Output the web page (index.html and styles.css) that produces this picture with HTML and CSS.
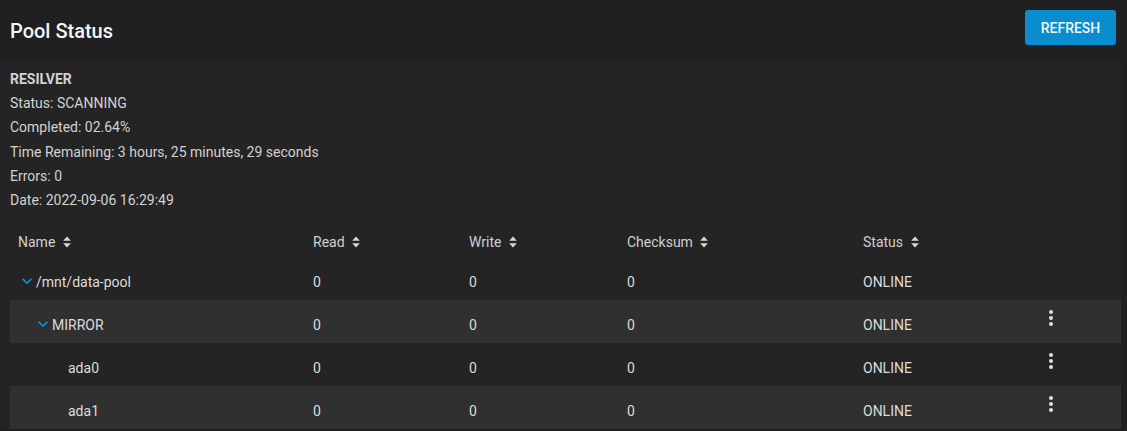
FILE: index.html
```html
<!DOCTYPE html>
<html>
<head>
    <title>Pool Status</title>
    <link rel="stylesheet" href="styles.css">
</head>
<body>
    <div class="page-header">
        <h1>Pool Status</h1>
        <button class="btn-refresh">Refresh</button>
    </div>

    <div class="card">
        <div class="scan-info">
            <div class="scan-title">RESILVER</div>
            <div>Status: SCANNING</div>
            <div>Completed: 02.64%</div>
            <div>Time Remaining: 3 hours, 25 minutes, 29 seconds</div>
            <div>Errors: 0</div>
            <div>Date: 2022-09-06 16:29:49</div>
        </div>

        <table class="pool-table">
            <colgroup>
                <col style="width: 295px">
                <col style="width: 156px">
                <col style="width: 158px">
                <col style="width: 236px">
                <col style="width: 174px">
                <col>
            </colgroup>
            <thead>
                <tr>
                    <th>Name <span class="sort"><svg viewBox="0 0 8 12" width="8" height="12"><path d="M4 0.5 L7.8 4.8 H0.2 Z M4 11.5 L7.8 7.2 H0.2 Z" fill="#d6d6d6"/></svg></span></th>
                    <th>Read <span class="sort"><svg viewBox="0 0 8 12" width="8" height="12"><path d="M4 0.5 L7.8 4.8 H0.2 Z M4 11.5 L7.8 7.2 H0.2 Z" fill="#d6d6d6"/></svg></span></th>
                    <th>Write <span class="sort"><svg viewBox="0 0 8 12" width="8" height="12"><path d="M4 0.5 L7.8 4.8 H0.2 Z M4 11.5 L7.8 7.2 H0.2 Z" fill="#d6d6d6"/></svg></span></th>
                    <th>Checksum <span class="sort"><svg viewBox="0 0 8 12" width="8" height="12"><path d="M4 0.5 L7.8 4.8 H0.2 Z M4 11.5 L7.8 7.2 H0.2 Z" fill="#d6d6d6"/></svg></span></th>
                    <th>Status <span class="sort"><svg viewBox="0 0 8 12" width="8" height="12"><path d="M4 0.5 L7.8 4.8 H0.2 Z M4 11.5 L7.8 7.2 H0.2 Z" fill="#d6d6d6"/></svg></span></th>
                    <th></th>
                </tr>
            </thead>
            <tbody>
                <tr>
                    <td><div class="name-cell"><svg class="chevron" viewBox="0 0 24 24" width="20" height="20"><path d="M7.41 8.59L12 13.17l4.59-4.58L18 10l-6 6-6-6 1.41-1.41z" fill="#0a95d6"/></svg>/mnt/data-pool</div></td>
                    <td>0</td>
                    <td>0</td>
                    <td>0</td>
                    <td>ONLINE</td>
                    <td class="actions"></td>
                </tr>
                <tr class="striped">
                    <td><div class="name-cell level-1"><svg class="chevron" viewBox="0 0 24 24" width="20" height="20"><path d="M7.41 8.59L12 13.17l4.59-4.58L18 10l-6 6-6-6 1.41-1.41z" fill="#0a95d6"/></svg>MIRROR</div></td>
                    <td>0</td>
                    <td>0</td>
                    <td>0</td>
                    <td>ONLINE</td>
                    <td class="actions"><svg viewBox="0 0 24 24" width="24" height="24"><circle cx="12" cy="6" r="2" fill="#e0e0e0"/><circle cx="12" cy="12" r="2" fill="#e0e0e0"/><circle cx="12" cy="18" r="2" fill="#e0e0e0"/></svg></td>
                </tr>
                <tr>
                    <td><div class="name-cell level-2"><span class="leaf"></span>ada0</div></td>
                    <td>0</td>
                    <td>0</td>
                    <td>0</td>
                    <td>ONLINE</td>
                    <td class="actions"><svg viewBox="0 0 24 24" width="24" height="24"><circle cx="12" cy="6" r="2" fill="#e0e0e0"/><circle cx="12" cy="12" r="2" fill="#e0e0e0"/><circle cx="12" cy="18" r="2" fill="#e0e0e0"/></svg></td>
                </tr>
                <tr class="striped">
                    <td><div class="name-cell level-2"><span class="leaf"></span>ada1</div></td>
                    <td>0</td>
                    <td>0</td>
                    <td>0</td>
                    <td>ONLINE</td>
                    <td class="actions"><svg viewBox="0 0 24 24" width="24" height="24"><circle cx="12" cy="6" r="2" fill="#e0e0e0"/><circle cx="12" cy="12" r="2" fill="#e0e0e0"/><circle cx="12" cy="18" r="2" fill="#e0e0e0"/></svg></td>
                </tr>
            </tbody>
        </table>
    </div>
</body>
</html>
```

FILE: styles.css
```css
body {
    margin: 0;
    font-family: Roboto, 'Liberation Sans', sans-serif;
    background-color: #1f1f1f;
    color: #dcdcdc;
    width: 1127px;
    height: 431px;
    overflow: hidden;
}

.page-header {
    height: 60px;
    display: flex;
    align-items: center;
    justify-content: space-between;
    padding: 0 11px 0 10px;
    background-color: #202020;
}

.page-header h1 {
    margin: 0;
    font-size: 20px;
    font-weight: 500;
    color: #f5f5f5;
    padding-top: 1px;
}

.btn-refresh {
    height: 35px;
    width: 91px;
    padding: 0;
    margin-top: -5px;
    border: none;
    border-radius: 3px;
    background-color: #0a8dcf;
    color: #f2f8fc;
    font-family: Roboto, 'Liberation Sans', sans-serif;
    font-size: 14px;
    font-weight: 500;
    text-transform: uppercase;
}

.card {
    width: 1121px;
    height: 369px;
    background-color: #242424;
    padding: 7px 0 0 0;
    box-sizing: border-box;
}

.scan-info {
    padding-left: 10px;
    font-size: 14px;
    line-height: 24.2px;
    color: #d2d2d2;
}

.scan-title {
    font-weight: 700;
}

.pool-table {
    margin-left: 10px;
    width: 1111px;
    table-layout: fixed;
    border-collapse: collapse;
    font-size: 14px;
}

.pool-table th {
    text-align: left;
    font-weight: 400;
    color: #d0d0d0;
    height: 45px;
    padding: 21px 8px 0 8px;
    box-sizing: border-box;
    line-height: 18px;
    vertical-align: top;
}

.sort {
    display: inline-block;
    margin-left: 4px;
    vertical-align: -1px;
}

.sort svg {
    display: block;
}

.pool-table td {
    height: 43px;
    padding: 16px 8px 0 8px;
    box-sizing: border-box;
    line-height: 18px;
    vertical-align: top;
    color: #dcdcdc;
}

.pool-table tr.striped td {
    background-color: #303030;
}

.name-cell {
    display: flex;
    align-items: center;
}

.name-cell.level-1 {
    padding-left: 16px;
}

.name-cell.level-2 {
    padding-left: 32px;
}

.chevron {
    flex: none;
    margin: -3px -1px 0 -1px;
}

.leaf {
    display: inline-block;
    width: 18px;
}

.pool-table td.actions {
    padding: 6px 0 0 10px;
    line-height: 0;
}
```
